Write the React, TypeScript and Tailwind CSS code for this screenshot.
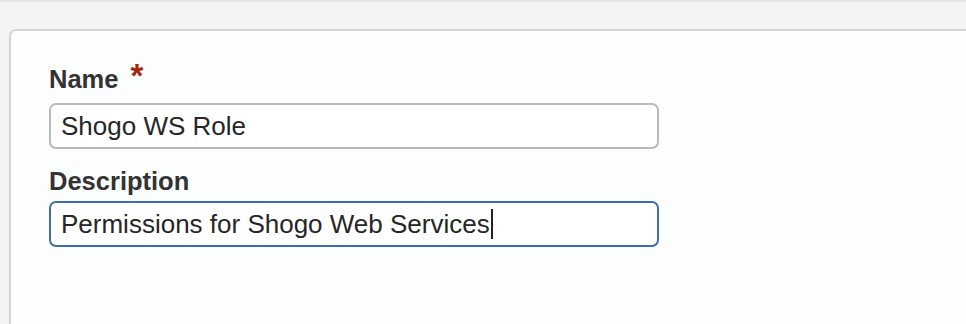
function Field({
  label,
  value,
  required,
  focused,
  gap,
}: {
  label: string;
  value: string;
  required?: boolean;
  focused?: boolean;
  gap: string;
}) {
  return (
    <div>
      <label className={`block font-bold text-[25.5px] leading-[28px] text-[#333333] ${gap}`}>
        {label}
        {required && (
          <span className="ml-[12px] inline-block align-top relative top-[-6px] text-[33px] leading-none text-[#a3260f]">
            *
          </span>
        )}
      </label>
      <div
        className={`w-[610px] h-[46px] rounded-[7px] border-2 bg-white pl-[10px] flex items-center text-[26px] leading-[42px] text-[#262626] ${
          focused ? "border-[#3e6fa9]" : "border-[#b7bbbc]"
        }`}
      >
        <span className="whitespace-pre">{value}</span>
        {focused && <span className="inline-block w-[2px] h-[30px] bg-[#222] ml-[1px]" />}
      </div>
    </div>
  );
}

export default function App() {
  return (
    <div
      className="h-[324px] w-[966px] overflow-hidden bg-[#f2f3f5] flex flex-col"
      style={{ fontFamily: '"Liberation Sans", Arial, sans-serif' }}
    >
      <div className="h-[2px] bg-[#e3e5e8] shrink-0" />
      <div className="flex-1 pt-[27px] pl-[9px]">
        <div className="h-full rounded-tl-[7px] border-2 border-r-0 border-b-0 border-[#d1d5d7] bg-[#fcfdfd] pl-[38px] pt-[34px]">
          <Field label="Name" value="Shogo WS Role" required gap="mb-[5px]" />
          <div className="mt-[18px]">
            <Field label="Description" value="Permissions for Shogo Web Services" focused gap="mb-[6px]" />
          </div>
        </div>
      </div>
    </div>
  );
}
